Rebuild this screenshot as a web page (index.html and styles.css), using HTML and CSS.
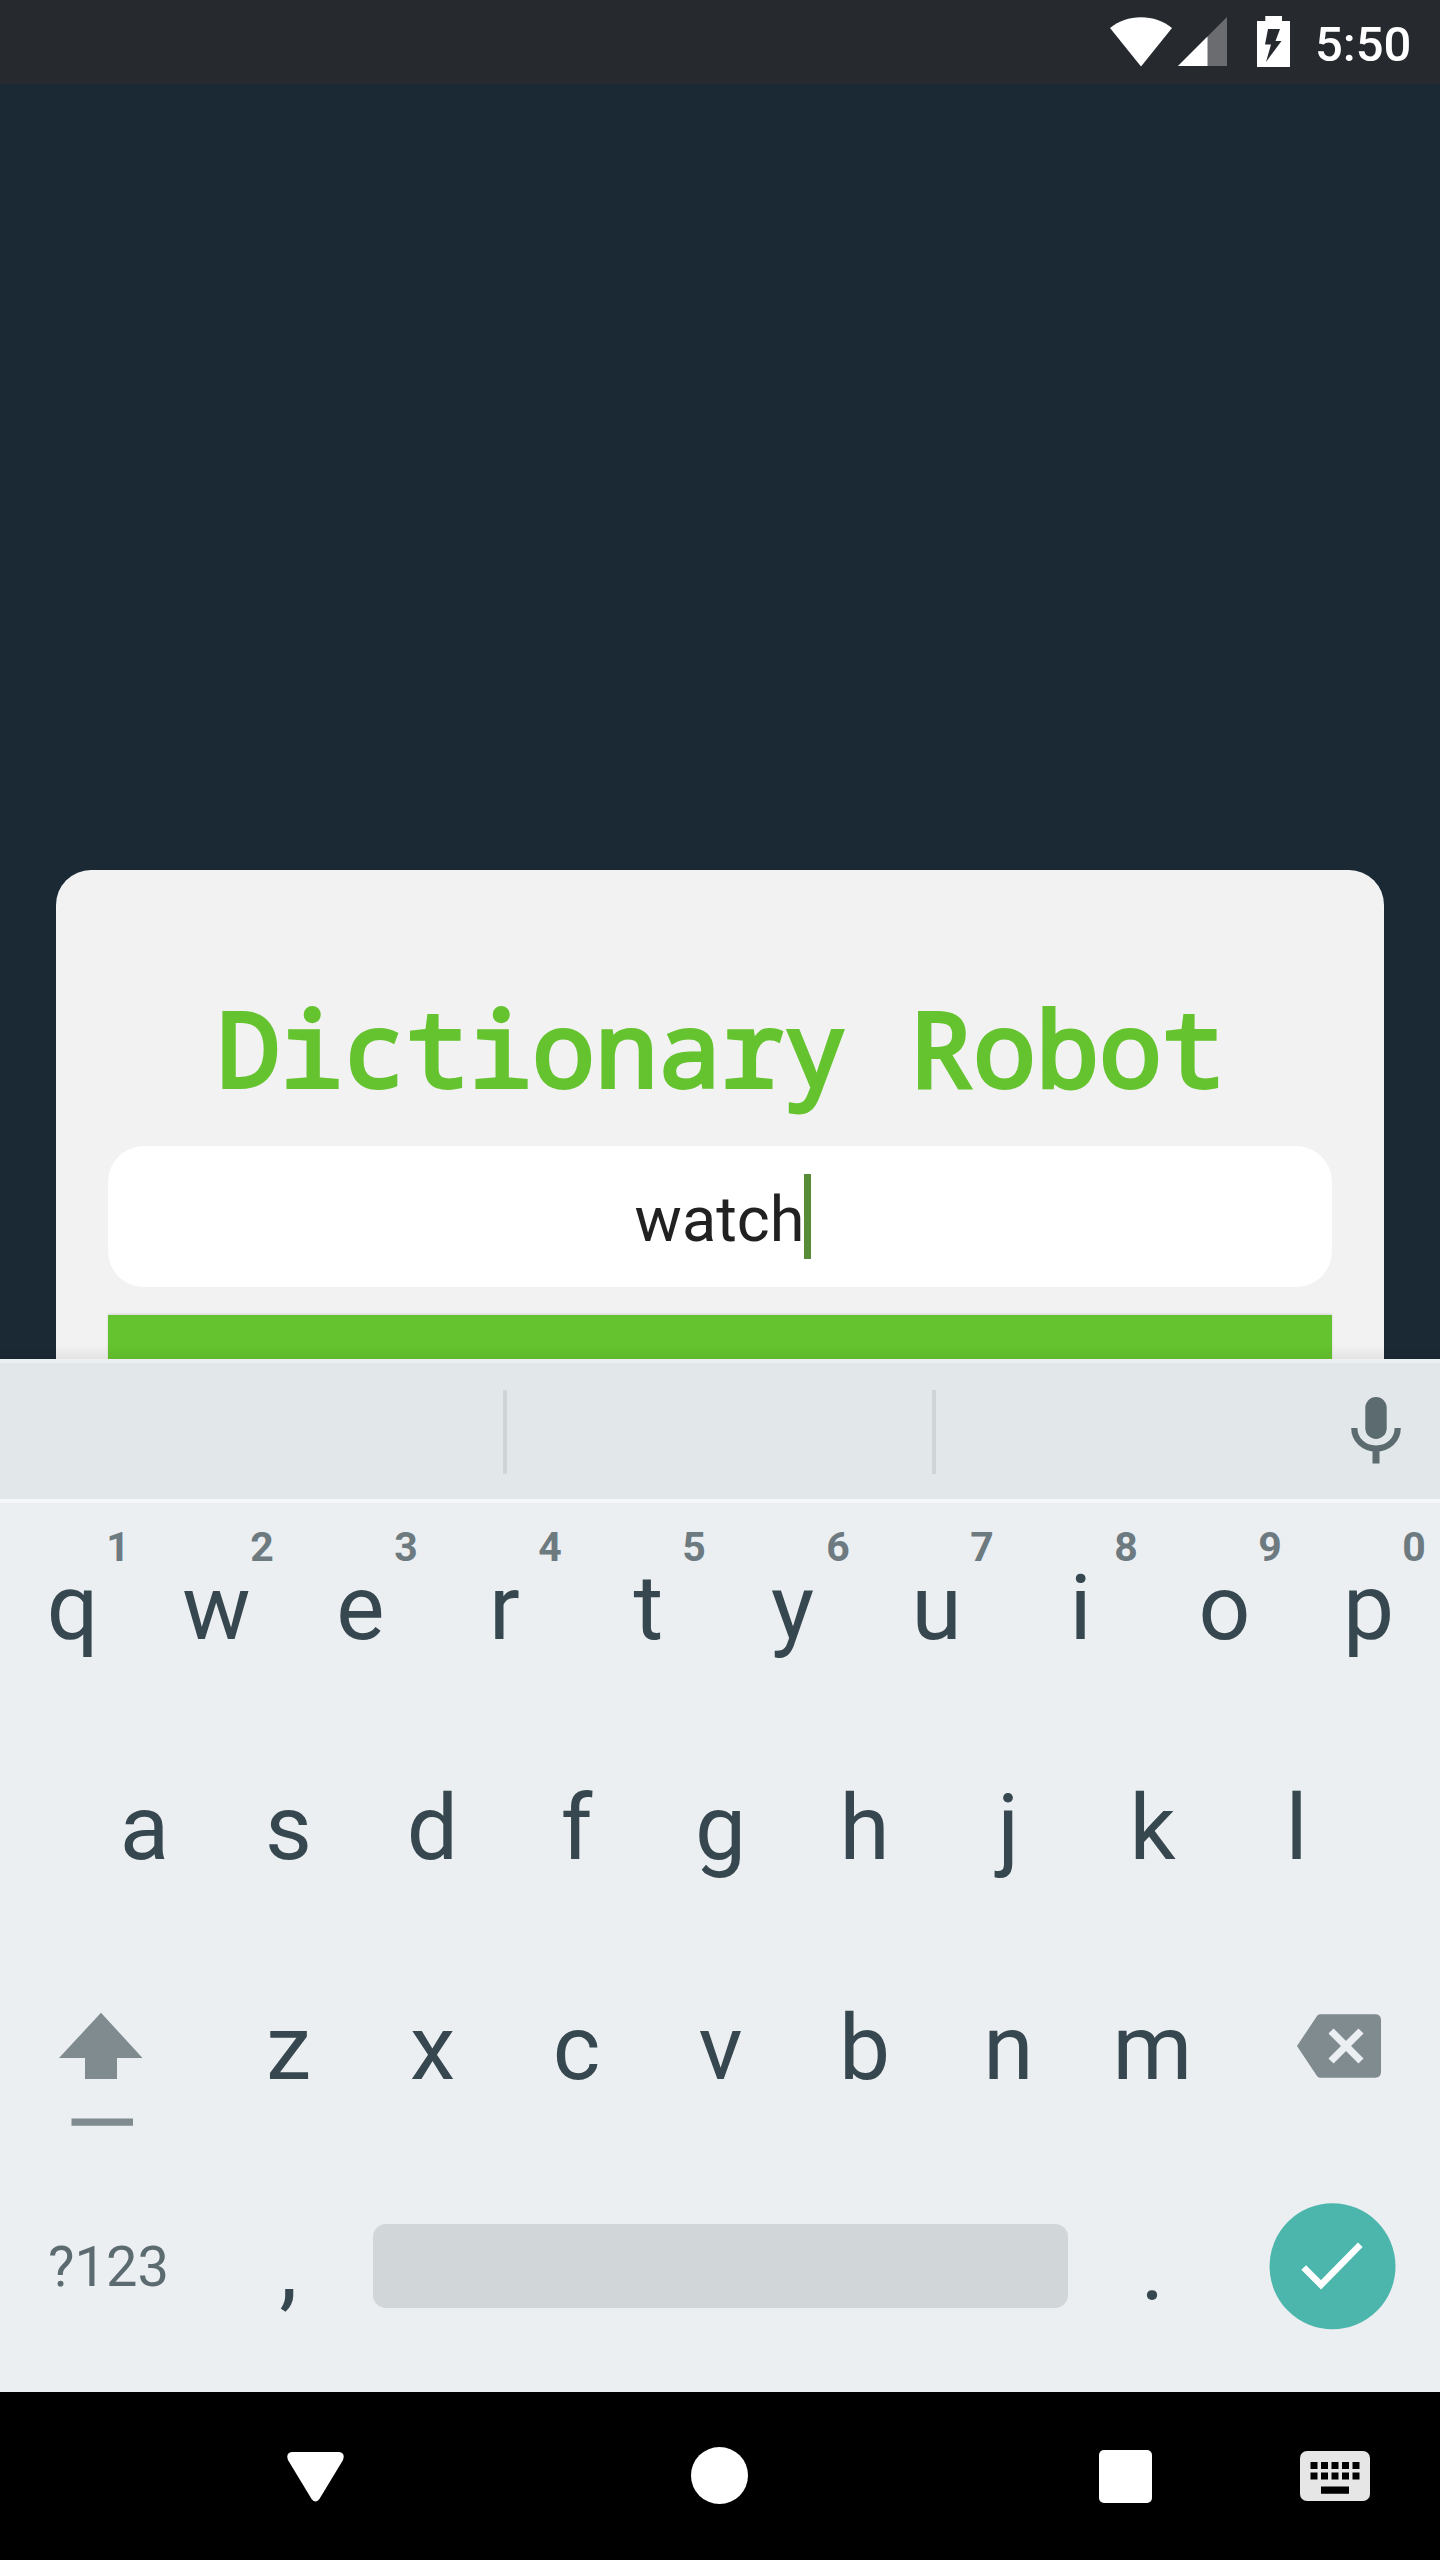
FILE: index.html
```html
<!DOCTYPE html>
<html lang="en">
<head>
<meta charset="utf-8">
<title>Dictionary Robot</title>
<link rel="stylesheet" href="styles.css">
</head>
<body>
<div class="screen">
  <header class="status">
    <svg class="wifi" width="62" height="50" viewBox="0 0 62 50"><path d="M31 49.500L0 11C9 4 19 0.300 31 0.300S53 4 62 11Z" fill="#fff"/></svg>
    <svg class="signal" width="49" height="50" viewBox="0 0 49 50"><path d="M49 0V49H0Z" fill="#6b6c70"/><path d="M29.500 19.500V49H0Z" fill="#fff"/></svg>
    <svg class="battery" width="33" height="51" viewBox="0 0 33 51"><path d="M8.300 0H25V5H33V51H0V5H8.300Z" fill="#fff"/><path d="M11 13H23L18.500 25H24.500L9 46L14 28.500H8Z" fill="#26292e"/></svg>
    <span class="clock">5:50</span>
  </header>

  <main class="app">
    <section class="card">
      <h1 class="title">Dictionary Robot</h1>
      <div class="field"><span class="word">watch</span><i class="caret"></i></div>
      <div class="submit"></div>
    </section>
  </main>

  <section class="keyboard">
    <div class="suggestions">
      <i class="divider"></i>
      <i class="divider"></i>
      <svg class="mic" width="50" height="68" viewBox="0 0 50 68"><rect x="14.300" y="1" width="21.400" height="42" rx="10.700" fill="#5c6b70"/><path d="M3.300 32C3.300 44 13 52.500 25 52.500S46.700 44 46.700 32" fill="none" stroke="#5c6b70" stroke-width="6.200"/><path d="M21.500 53H28.500V67.500H21.500Z" fill="#5c6b70"/></svg>
    </div>
    <div class="keys">
      <div class="row first">
        <span class="key">q<b>1</b></span><span class="key">w<b>2</b></span><span class="key">e<b>3</b></span><span class="key">r<b>4</b></span><span class="key">t<b>5</b></span><span class="key">y<b>6</b></span><span class="key">u<b>7</b></span><span class="key">i<b>8</b></span><span class="key">o<b>9</b></span><span class="key">p<b>0</b></span>
      </div>
      <div class="row">
        <span class="key">a</span><span class="key">s</span><span class="key">d</span><span class="key">f</span><span class="key">g</span><span class="key">h</span><span class="key">j</span><span class="key">k</span><span class="key">l</span>
      </div>
      <div class="row">
        <svg class="wide" viewBox="0 0 216 220"><path d="M101 74.700L142.500 120H117V141H85V120H59Z" fill="#7f8b8f"/><path d="M71.500 180.500H133V187.700H71.500Z" fill="#7f8b8f"/></svg>
        <span class="key">z</span><span class="key">x</span><span class="key">c</span><span class="key">v</span><span class="key">b</span><span class="key">n</span><span class="key">m</span>
        <svg class="wide" viewBox="0 0 216 220"><path d="M96 76.200H151Q157 76.200 157 82V134Q157 139.700 151 139.700H96Q94 139.700 93 138L73 108L93 78Q94 76.200 96 76.200Z" fill="#7f8b8f"/><path d="M107 93L137 123M137 93L107 123" stroke="#ebeff2" stroke-width="7.200"/></svg>
      </div>
      <div class="row">
        <span class="mode">?123</span>
        <span class="key">,</span>
        <div class="space"></div>
        <span class="key">.</span>
        <svg class="wide" viewBox="0 0 216 220"><circle cx="108.500" cy="108.300" r="63" fill="#4db6ac"/><path d="M79.700 109.500L97 126.800L136.300 86.700" fill="none" stroke="#fff" stroke-width="6.600"/></svg>
      </div>
    </div>
  </section>

  <nav class="nav">
    <svg class="back" width="57" height="50" viewBox="0 0 58 50" preserveAspectRatio="none"><path d="M5 0H53Q59.500 1 57 8L33 47Q29 52 25 47L1 8Q-1.500 1 5 0Z" fill="#fff"/></svg>
    <i class="home"></i>
    <i class="recent"></i>
    <svg class="ime" width="70" height="50" viewBox="0 0 70 50"><rect width="70" height="50" rx="7" fill="#e6e6e6"/><path d="M10.500 11h7v7h-7zM21 11h7v7h-7zM31.500 11h7v7h-7zM42 11h7v7h-7zM52.500 11h7v7h-7zM10.500 21.500h7v7h-7zM21 21.500h7v7h-7zM31.500 21.500h7v7h-7zM42 21.500h7v7h-7zM52.500 21.500h7v7h-7zM21 35.500h28v7.200h-28z" fill="#000"/></svg>
  </nav>
</div>
</body>
</html>
```
FILE: styles.css
```css
* { box-sizing: border-box; }
body { margin: 0; font-family: Roboto, sans-serif; background: #1b2935; }
svg { display: block; flex: none; }
.screen { width: 1440px; height: 2560px; display: flex; flex-direction: column; overflow: hidden; }

.status { height: 84px; background: #26292e; display: flex; align-items: flex-start; justify-content: flex-end; padding-right: 28px; }
.wifi { margin: 17px 6px 0 0; }
.signal { margin: 17px 30px 0 0; }
.battery { margin: 16px 25px 0 0; }
.clock { width: 97px; color: #fff; font-size: 49px; font-weight: 500; line-height: 57px; margin-top: 16px; white-space: nowrap; }

.app { position: relative; height: 1275px; padding: 786px 56px 0; background: #1b2935; overflow: hidden; }
.app::after { content: ""; position: absolute; left: 0; right: 0; bottom: 0; height: 14px; background: linear-gradient(rgba(0,0,0,0), rgba(0,0,0,.06)); }
.card { height: 800px; padding: 107px 52px 0; background: #f2f2f2; border-radius: 35px; }
.title { margin: 0 0 29px; font: 400 105px/140px "Droid Sans Mono", "Noto Sans Mono", "DejaVu Sans Mono", monospace; padding-left: 2px; text-align: center; white-space: nowrap; color: #64c32e; -webkit-text-stroke: 3.800px #64c32e; }
.field { height: 141px; border-radius: 36px; background: #fff; display: flex; justify-content: center; align-items: center; }
.word { font-size: 63px; line-height: 84px; color: #212121; margin-left: 6px; padding-top: 6px; }
.caret { width: 7px; height: 85px; background: #568d36; }
.submit { height: 168px; margin-top: 28px; background: #64c32e; box-shadow: 0 -1px 2px rgba(0,0,0,.12); }

.keyboard { height: 1033px; background: #ebeff2; }
.suggestions { height: 140px; border-top: 4px solid #edf0f2; background: #e2e7ea; display: flex; align-items: flex-start; padding-left: 503px; }
.divider { width: 4px; height: 84px; margin: 27px 425px 0 0; background: #cfd4d7; }
.divider + .divider { margin-right: 415px; }
.mic { margin-top: 33px; }
.keys { box-shadow: inset 0 4px #f5f7f9; }
.row { height: 220px; line-height: 220px; display: flex; justify-content: center; }
.first { height: 219px; line-height: 218px; }
.key { position: relative; width: 144px; padding-left: 1px; text-align: center; font-size: 91px; color: #37474f; }
.key b { position: absolute; left: 98px; top: 24px; width: 40px; font-size: 41px; line-height: 48px; font-weight: 700; color: #6d7a80; }
.wide { width: 216px; height: 220px; }
.mode { width: 216px; padding-left: 1px; text-align: center; font-size: 56px; color: #5c6b70; line-height: 218px; }
.space { width: 695px; height: 84px; margin: 66px 12px 0 13px; border-radius: 13px; background: #d1d6d9; }

.nav { flex: 1; background: #000; display: flex; align-items: flex-start; padding-left: 287px; }
.back { margin-top: 60px; }
.home { width: 57px; height: 57px; margin: 55px 0 0 347px; border-radius: 50%; background: #fff; }
.recent { width: 53px; height: 53px; margin: 58px 0 0 351px; border-radius: 5px; background: #fff; }
.ime { margin: 59px 0 0 148px; }
```
